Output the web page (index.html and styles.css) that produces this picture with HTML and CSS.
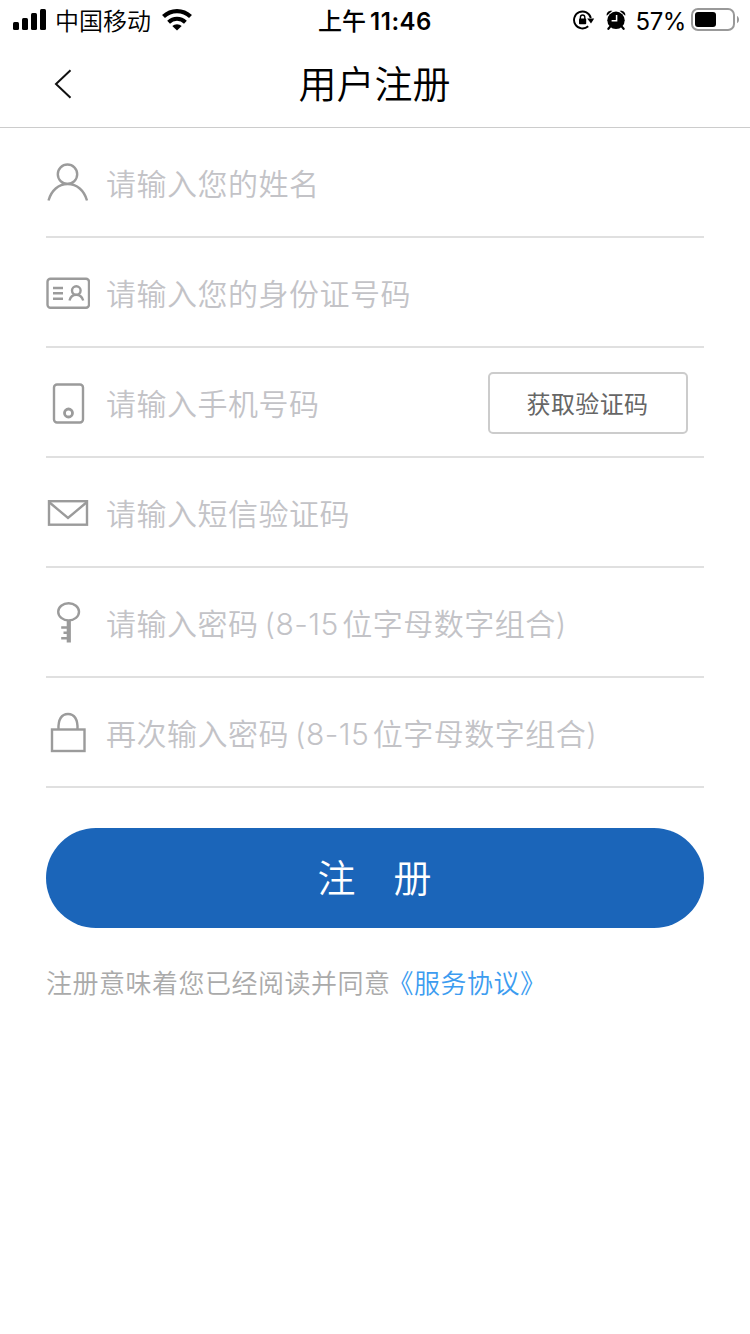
FILE: index.html
```html
<!DOCTYPE html>
<html lang="zh-CN">
<head>
    <meta charset="UTF-8">
    <meta name="viewport" content="width=device-width, initial-scale=1.0">
    <title>用户注册</title>
    <link rel="stylesheet" href="styles.css">
</head>
<body>
    <div class="status">
        <div class="status-left">
            <svg class="signal" width="34" height="22" viewBox="0 0 34 22">
                <rect x="0" y="13" width="6" height="8" rx="1.5"/>
                <rect x="9" y="9" width="6" height="12" rx="1.5"/>
                <rect x="18" y="4" width="6" height="17" rx="1.5"/>
                <rect x="27" y="0" width="6" height="21" rx="1.5"/>
            </svg>
            <span class="carrier">中国移动</span>
            <svg class="wifi" width="30" height="22" viewBox="0 0 30 22">
                <path d="M1.5 7.6a19.5 19.5 0 0 1 27 0" fill="none" stroke="#000" stroke-width="4.2"/>
                <path d="M6.6 13.2a12 12 0 0 1 16.8 0" fill="none" stroke="#000" stroke-width="4"/>
                <path d="M15 21.6l-4.7-4.5a6.8 6.8 0 0 1 9.4 0z"/>
            </svg>
        </div>
        <div class="time"><span>上午</span><span class="clock">11:46</span></div>
        <div class="status-right">
            <svg class="rotate" width="22" height="20" viewBox="0 0 22 20">
                <path d="M17.8 8a8.5 8.5 0 1 0-2.6 8.3" fill="none" stroke="#000" stroke-width="1.9"/>
                <path d="M14.2 8.6h7L18 13.4z"/>
                <rect x="6" y="8.6" width="7.2" height="5.6" rx=".8"/>
                <path d="M7.4 9V7.2a2.2 2.2 0 0 1 4.4 0V9" fill="none" stroke="#000" stroke-width="1.4"/>
            </svg>
            <svg class="alarm" width="20" height="20" viewBox="0 0 20 20">
                <circle cx="10" cy="10.3" r="8.7"/>
                <path d="M.8 5.8C0 2.4 3 0 6.4.8zM19.2 5.8C20 2.4 17 0 13.6.8z"/>
                <path d="M4.2 16.6l-1.8 2.2M15.8 16.6l1.8 2.2" stroke="#000" stroke-width="2.2" stroke-linecap="round"/>
                <path d="M10.6 5v5.8h-5" fill="none" stroke="#fff" stroke-width="1.5"/>
            </svg>
            <span class="percent">57%</span>
            <svg class="battery" width="49" height="24" viewBox="0 0 49 24">
                <rect x="1" y="1" width="42" height="21" rx="6" fill="none" stroke="#999" stroke-width="2"/>
                <rect x="4" y="4" width="21" height="15" rx="3"/>
                <path d="M46 8c2.7 1.2 2.7 6 0 7.2z" fill="#999"/>
            </svg>
        </div>
    </div>

    <header class="header">
        <svg class="back" width="18" height="30" viewBox="0 0 18 30">
            <path d="M16.5 1.3L2 15l14.500 13.700" fill="none" stroke="#111" stroke-width="2"/>
        </svg>
        <h1 class="title">用户注册</h1>
    </header>

    <form class="form">
        <label class="row">
            <svg class="icon" width="44" height="44" viewBox="0 0 44 44">
                <circle cx="21.5" cy="13.2" r="9.7"/>
                <path d="M2.5 39.5C5.3 29.5 12.5 23 21.700 23S38.200 29.500 41 39.500"/>
            </svg>
            <input class="field" type="text" placeholder="请输入您的姓名">
        </label>
        <label class="row">
            <svg class="icon" width="44" height="44" viewBox="0 0 44 44">
                <rect x="1.5" y="7.8" width="41.5" height="29" rx="3"/>
                <path d="M7 17h10M7 22.3h10M7 27.8h10M23.5 29.5c1-4 3.5-5.7 6.7-5.7s5.8 1.7 7 5.7"/>
                <circle cx="30.3" cy="19.6" r="4.3"/>
            </svg>
            <input class="field" type="text" placeholder="请输入您的身份证号码">
        </label>
        <label class="row">
            <svg class="icon" width="44" height="44" viewBox="0 0 44 44">
                <rect x="8" y="3.5" width="29" height="38" rx="3"/>
                <circle cx="22.5" cy="32" r="4" stroke-width="2.8"/>
            </svg>
            <input class="field" type="tel" placeholder="请输入手机号码">
            <button class="code-btn" type="button">获取验证码</button>
        </label>
        <label class="row">
            <svg class="icon" width="44" height="44" viewBox="0 0 44 44">
                <rect x="3" y="10.2" width="38" height="23.5"/>
                <path d="M3 11l19 16 19-16"/>
            </svg>
            <input class="field" type="text" placeholder="请输入短信验证码">
        </label>
        <label class="row">
            <svg class="icon" width="44" height="44" viewBox="0 0 44 44">
                <ellipse cx="22.6" cy="10.8" rx="10.4" ry="8.6"/>
                <path d="M22.8 19v22.5" stroke-width="4.2"/>
                <path d="M15.2 26.5h6M17.5 31.8h4M15.2 37.2h6"/>
            </svg>
            <input class="field" type="text" placeholder="请输入密码&#8201;(8-15&#8202;位字母数字组合)">
        </label>
        <label class="row">
            <svg class="icon" width="44" height="44" viewBox="0 0 44 44">
                <rect x="6" y="18.5" width="32.5" height="21.5"/>
                <path d="M12.5 18.5C12 8.5 15.5 3 22 3s10 5.5 9.5 15.5"/>
            </svg>
            <input class="field" type="text" placeholder="再次输入密码&#8201;(8-15&#8202;位字母数字组合)">
        </label>

        <button class="submit" type="button">注&#12288;册</button>
        <p class="agreement">注册意味着您已经阅读并同意<a class="link">《服务协议》</a></p>
    </form>
</body>
</html>
```

FILE: styles.css
```css
*{
    box-sizing: border-box;
}

body{
    margin: 0;
    width: 750px;
    height: 1334px;
    background: #fff;
    color: #000;
    font-family: Inter, "Noto Sans CJK SC", sans-serif;
}

.status{
    display: grid;
    grid-template-columns: 1fr auto 1fr;
    align-items: center;
    height: 40px;
    padding: 0 10px 0 13px;
    font-size: 24px;
    line-height: 35px;
    white-space: nowrap;
}

.status-left,
.status-right,
.time{
    display: flex;
    align-items: center;
}

.carrier,
.percent,
.time{
    padding-top: 3px;
}

.carrier{
    margin: 0 11px 0 8px;
    font-weight: 350;
}

.time{
    padding-right: 3px;
    font-weight: 500;
}

.clock{
    margin-left: 4px;
    font-weight: 600;
    letter-spacing: 0.5px;
}

.status-right{
    justify-content: flex-end;
}

.alarm{
    margin: 0 9px 0 11px;
}

.percent{
    margin-right: 5px;
    letter-spacing: -0.4px;
}

.header{
    display: grid;
    grid-template-columns: 1fr auto 1fr;
    align-items: center;
    height: 88px;
    padding: 0 55px 0 54px;
    border-bottom: 1px solid #ccc;
}

.title{
    margin: 0;
    padding-top: 1px;
    font-size: 38px;
    font-weight: 350;
    line-height: 85px;
}

.form{
    padding: 0 46px;
}

.row{
    display: flex;
    align-items: center;
    height: 110px;
    padding-top: 2px;
    border-bottom: 2px solid #e0e0e0;
}

.icon{
    flex: none;
    fill: none;
    stroke: #9b9b9b;
    stroke-width: 2.4;
}

.field{
    flex: 1;
    min-width: 0;
    height: 60px;
    margin-left: 16px;
    padding: 2px 0 0;
    border: 0;
    outline: none;
    background: none;
    font-family: inherit;
    font-size: 30px;
    font-weight: 350;
    letter-spacing: 0.5px;
}

.field::placeholder{
    color: #c3c3c7;
}

.code-btn{
    width: 200px;
    height: 62px;
    margin-right: 16px;
    padding: 0 1px 2px 0;
    border: 2px solid #ccc;
    border-radius: 5px;
    background: #fff;
    color: #666;
    font-family: inherit;
    font-size: 24px;
    letter-spacing: 0.4px;
}

.submit{
    display: block;
    width: 100%;
    height: 100px;
    margin-top: 40px;
    padding: 0 1px 6px 0;
    border: 0;
    border-radius: 50px;
    background: #1b65b9;
    color: #fff;
    font-family: inherit;
    font-size: 38px;
    font-weight: 350;
}

.agreement{
    margin: 37px 0 0;
    color: #aaa;
    font-size: 26px;
    font-weight: 350;
    line-height: 38px;
    letter-spacing: 0.5px;
}

.link{
    margin-left: -3px;
    color: #3c9cf0;
}
```
